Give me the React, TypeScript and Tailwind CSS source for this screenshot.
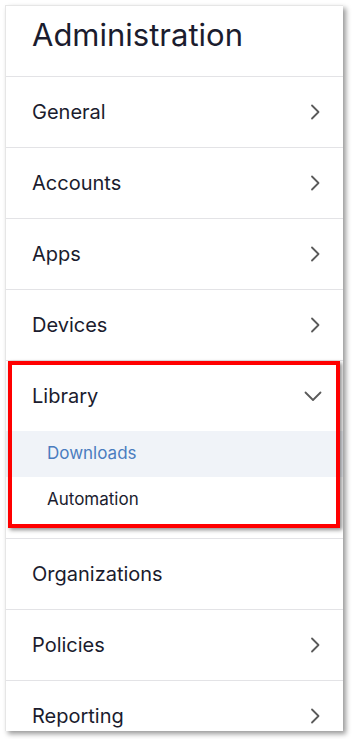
import React from "react";

const Chevron = () => (
  <svg width="10" height="16" viewBox="0 0 10 16" fill="none" className="shrink-0">
    <path d="M2 1.5 L8.5 8 L2 14.5" stroke="#5a5a5a" strokeWidth="1.8" strokeLinecap="round" strokeLinejoin="round" />
  </svg>
);

const ChevronDown = () => (
  <svg width="18" height="11" viewBox="0 0 18 11" fill="none" className="shrink-0">
    <path d="M1.5 1.5 L9 9 L16.5 1.5" stroke="#5a5a5a" strokeWidth="1.8" strokeLinecap="round" strokeLinejoin="round" />
  </svg>
);

const Row = ({ label, chevron = true }: { label: string; chevron?: boolean }) => (
  <div className="flex h-[71px] items-center justify-between border-t border-[#e3e3e6] pl-[26px] pr-[23px]">
    <span className="text-[20px] text-[#1b1c2e]">{label}</span>
    {chevron && <Chevron />}
  </div>
);

export default function App() {
  return (
    <div className="h-[739px] w-[353px] bg-white pl-[5px] pt-[5px]" style={{ fontFamily: "Inter, 'Noto Sans', sans-serif" }}>
      <div className="h-[726px] w-[338px] overflow-hidden border-l border-t border-[#e6e6e6] bg-white shadow-[3px_3px_5px_rgba(0,0,0,0.4)]">
        <div className="flex h-[70px] items-center pb-[13px] pl-[26px]">
          <h1 className="text-[31px] font-normal leading-none text-[#1b1c2e]">Administration</h1>
        </div>
        <Row label="General" />
        <Row label="Accounts" />
        <Row label="Apps" />
        <Row label="Devices" />
        <div className="relative border-t border-[#e3e3e6] pb-[15px]">
          <div className="flex h-[70px] items-center justify-between pl-[26px] pr-[21px]">
            <span className="text-[20px] text-[#1b1c2e]">Library</span>
            <ChevronDown />
          </div>
          <div className="flex h-[46px] items-center bg-[#f0f3f8] pl-[41px]">
            <span className="text-[17px] text-[#4a7cbf]">Downloads</span>
          </div>
          <div className="flex h-[46px] items-center pl-[41px]">
            <span className="text-[17px] text-[#1b1c2e]">Automation</span>
          </div>
          <div className="pointer-events-none absolute left-[2px] top-0 h-[167px] w-[332px] border-4 border-[#ff0000] shadow-[2px_2px_4px_rgba(0,0,0,0.45)]" />
        </div>
        <Row label="Organizations" chevron={false} />
        <Row label="Policies" />
        <Row label="Reporting" />
      </div>
    </div>
  );
}
